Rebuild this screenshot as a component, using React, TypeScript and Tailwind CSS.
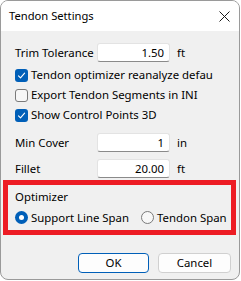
import React from "react";

const FONT = { fontFamily: '"Noto Sans", "Open Sans", Arial, sans-serif' };

function Field({ label, value, unit, className = "" }: { label: string; value: string; unit: string; className?: string }) {
  return (
    <div className={`flex h-[19px] items-center whitespace-nowrap ${className}`}>
      <div className="w-[82px] text-[11.4px] leading-none">{label}</div>
      <div className="flex h-[19px] w-[73px] items-center justify-end rounded-[3px] border border-[#e3e3e3] border-b-[#8a8a8a] bg-white pr-[5px] text-[11.4px] leading-none">
        {value}
      </div>
      <div className="ml-[7px] text-[11.4px] leading-none">{unit}</div>
    </div>
  );
}

function Check({ label, checked }: { label: string; checked: boolean }) {
  return (
    <div className="flex h-[20px] items-center whitespace-nowrap">
      {checked ? (
        <span className="flex h-[13px] w-[13px] items-center justify-center rounded-[3px] bg-[#005fb8]">
          <svg width="9" height="9" viewBox="0 0 9 9" fill="none">
            <path d="M1.5 4.8 L3.5 6.8 L7.6 2.2" stroke="white" strokeWidth="1.1" strokeLinecap="round" strokeLinejoin="round" />
          </svg>
        </span>
      ) : (
        <span className="h-[13px] w-[13px] rounded-[3px] border border-[#7a7a7a] bg-[#f7f7f7]" />
      )}
      <span className="ml-[3px] text-[11.4px] leading-none">{label}</span>
    </div>
  );
}

function Radio({ label, checked }: { label: string; checked: boolean }) {
  return (
    <div className="flex items-center whitespace-nowrap">
      {checked ? (
        <span className="flex h-[13px] w-[13px] items-center justify-center rounded-full bg-[#005fb8]">
          <span className="h-[5px] w-[5px] rounded-full bg-white" />
        </span>
      ) : (
        <span className="h-[13px] w-[13px] rounded-full border border-[#7a7a7a] bg-[#f7f7f7]" />
      )}
      <span className="ml-[3px] text-[11.4px] leading-none">{label}</span>
    </div>
  );
}

export default function App() {
  return (
    <div className="h-[281px] w-[241px] bg-white text-black" style={FONT}>
      <div className="flex h-[280px] w-[240px] flex-col overflow-hidden rounded-[8px] border border-[#9a9a9a] bg-[#f0f0f0]">
        <div className="flex h-[30px] items-center justify-between bg-white pl-[8px] pr-[9px]">
          <span className="text-[11.2px] leading-none">Tendon Settings</span>
          <svg width="11" height="11" viewBox="0 0 11 11">
            <path d="M0.5 0.5 L10.5 10.5 M10.5 0.5 L0.5 10.5" stroke="#1a1a1a" strokeWidth="1" />
          </svg>
        </div>
        <div className="flex flex-1 flex-col pl-[14px]">
          <Field label="Trim Tolerance" value="1.50" unit="ft" className="mt-[12px]" />
          <div className="mt-[3px] flex flex-col">
            <Check label="Tendon optimizer reanalyze defau" checked />
            <Check label="Export Tendon Segments in INI" checked={false} />
            <Check label="Show Control Points 3D" checked />
          </div>
          <Field label="Min Cover" value="1" unit="in" className="mt-[8px]" />
          <Field label="Fillet" value="20.00" unit="ft" className="mt-[7px]" />
        </div>
        <div className="mx-[2px] mt-[2px] flex h-[55px] w-[233px] flex-col border-[5px] border-[#ed1c24] pl-[7px]">
          <div className="mt-[6px] text-[11.4px] leading-none">Optimizer</div>
          <div className="mt-[9px] flex items-center gap-[12px]">
            <Radio label="Support Line Span" checked />
            <Radio label="Tendon Span" checked={false} />
          </div>
        </div>
        <div className="mb-[6px] mt-[18px] flex justify-end gap-[9px] pr-[8px]">
          <button className="flex h-[20px] w-[71px] items-center justify-center rounded-[4px] border border-[#005fb8] bg-[#fdfdfd] text-[11.4px] leading-none">
            OK
          </button>
          <button className="flex h-[20px] w-[73px] items-center justify-center rounded-[4px] border border-[#d0d0d0] bg-[#fdfdfd] text-[11.4px] leading-none">
            Cancel
          </button>
        </div>
      </div>
    </div>
  );
}
